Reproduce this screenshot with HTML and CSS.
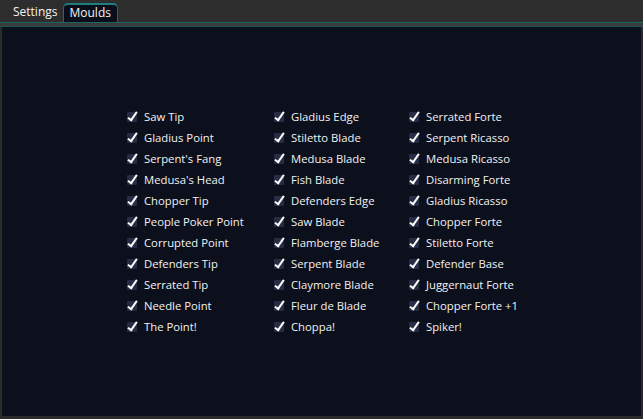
FILE: index.html
```html
<!DOCTYPE html>
<html>
<head>
<meta charset="utf-8">
<link rel="stylesheet" href="styles.css">
</head>
<body>
<div class="window">
  <div class="tabbar">
    <div class="tab">Settings</div>
    <div class="tab active">Moulds</div>
  </div>
  <div class="lines"></div>
  <div class="content">
    <div class="grid">
      <div class="col c1">
        <div class="item"><span class="cb"></span>Saw Tip</div>
        <div class="item"><span class="cb"></span>Gladius Point</div>
        <div class="item"><span class="cb"></span>Serpent's Fang</div>
        <div class="item"><span class="cb"></span>Medusa's Head</div>
        <div class="item"><span class="cb"></span>Chopper Tip</div>
        <div class="item"><span class="cb"></span>People Poker Point</div>
        <div class="item"><span class="cb"></span>Corrupted Point</div>
        <div class="item"><span class="cb"></span>Defenders Tip</div>
        <div class="item"><span class="cb"></span>Serrated Tip</div>
        <div class="item"><span class="cb"></span>Needle Point</div>
        <div class="item"><span class="cb"></span>The Point!</div>
      </div>
      <div class="col c2">
        <div class="item"><span class="cb"></span>Gladius Edge</div>
        <div class="item"><span class="cb"></span>Stiletto Blade</div>
        <div class="item"><span class="cb"></span>Medusa Blade</div>
        <div class="item"><span class="cb"></span>Fish Blade</div>
        <div class="item"><span class="cb"></span>Defenders Edge</div>
        <div class="item"><span class="cb"></span>Saw Blade</div>
        <div class="item"><span class="cb"></span>Flamberge Blade</div>
        <div class="item"><span class="cb"></span>Serpent Blade</div>
        <div class="item"><span class="cb"></span>Claymore Blade</div>
        <div class="item"><span class="cb"></span>Fleur de Blade</div>
        <div class="item"><span class="cb"></span>Choppa!</div>
      </div>
      <div class="col c3">
        <div class="item"><span class="cb"></span>Serrated Forte</div>
        <div class="item"><span class="cb"></span>Serpent Ricasso</div>
        <div class="item"><span class="cb"></span>Medusa Ricasso</div>
        <div class="item"><span class="cb"></span>Disarming Forte</div>
        <div class="item"><span class="cb"></span>Gladius Ricasso</div>
        <div class="item"><span class="cb"></span>Chopper Forte</div>
        <div class="item"><span class="cb"></span>Stiletto Forte</div>
        <div class="item"><span class="cb"></span>Defender Base</div>
        <div class="item"><span class="cb"></span>Juggernaut Forte</div>
        <div class="item"><span class="cb"></span>Chopper Forte +1</div>
        <div class="item"><span class="cb"></span>Spiker!</div>
      </div>
    </div>
  </div>
</div>
</body>
</html>
```
FILE: styles.css
```css
html, body {
  margin: 0;
  padding: 0;
  background: #2b2b2b;
  width: 643px;
  height: 419px;
  overflow: hidden;
  font-family: "Open Sans", "Noto Sans", sans-serif;
  font-size: 11.3px;
  color: #f2f2f2;
}
.window {
  display: flex;
  flex-direction: column;
  height: 419px;
}
.tabbar {
  height: 22px;
  display: flex;
  align-items: flex-end;
  padding-left: 6px;
  background: #2d2d2d;
}
.tab {
  height: 19px;
  line-height: 18px;
  padding: 0 7px;
  box-sizing: border-box;
  font-size: 12px;
}
.tab.active {
  margin-left: -2px;
  background: #0b0e1a;
  border: 1px solid #1f6b6b;
  border-top: 2px solid #1f7f7f;
  border-bottom: none;
  border-radius: 5px 5px 0 0;
  line-height: 16px;
  padding: 0 6px;
  font-size: 12px;
}
.lines {
  height: 3px;
  border-top: 1px solid #1b6464;
  border-bottom: 1px solid #1b5656;
  background: #3a3a3a;
}
.content {
  flex: 1;
  margin: 0 2px 3px 2px;
  background: #0c0f1c;
  padding-top: 79px;
}
.grid {
  display: flex;
  padding-left: 125px;
}
.col.c1 { width: 147px; }
.col.c2 { width: 135px; }
.col.c3 { width: 140px; }
.item {
  height: 21px;
  display: flex;
  align-items: center;
  white-space: nowrap;
}
.cb {
  position: relative;
  width: 10px;
  height: 10px;
  background: #272c45;
  border-radius: 1px;
  margin-right: 7px;
}
.cb::after {
  content: "";
  position: absolute;
  left: 3px;
  top: -2px;
  width: 3px;
  height: 9px;
  border-right: 2px solid #fafafa;
  border-bottom: 2px solid #fafafa;
  transform: rotate(35deg);
}
```
